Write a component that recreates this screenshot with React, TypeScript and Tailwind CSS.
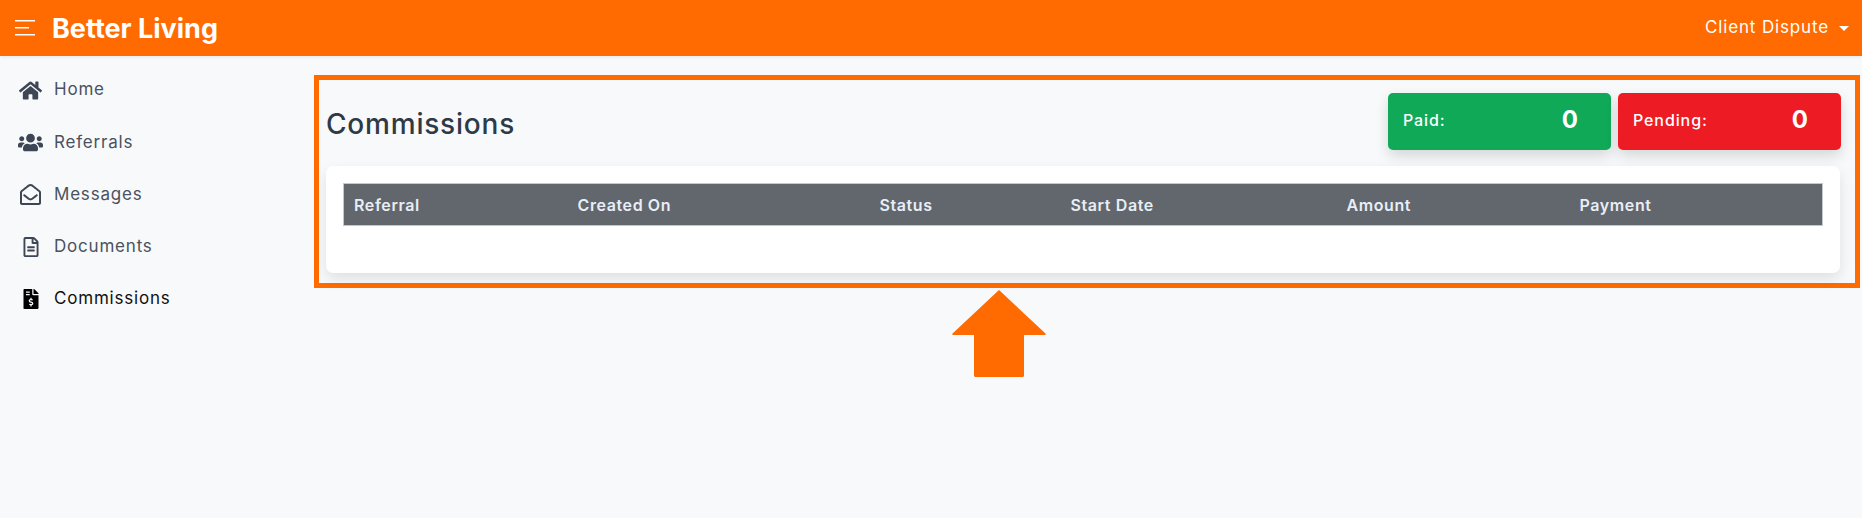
import { FaHome, FaUsers, FaRegEnvelopeOpen, FaRegFileAlt, FaFileInvoiceDollar } from "react-icons/fa";

const navItems = [
  { label: "Home", icon: FaHome, size: 23, active: false },
  { label: "Referrals", icon: FaUsers, size: 25, active: false },
  { label: "Messages", icon: FaRegEnvelopeOpen, size: 21, active: false },
  { label: "Documents", icon: FaRegFileAlt, size: 20, active: false },
  { label: "Commissions", icon: FaFileInvoiceDollar, size: 20, active: true },
];

const columns = [
  { label: "Referral", width: "w-[224px]" },
  { label: "Created On", width: "w-[302px]" },
  { label: "Status", width: "w-[191px]" },
  { label: "Start Date", width: "w-[276px]" },
  { label: "Amount", width: "w-[233px]" },
  { label: "Payment", width: "" },
];

const StatCard = ({ label, color }: { label: string; color: string }) => (
  <div className={`flex h-[57px] w-[223px] items-center justify-between rounded-[5px] pb-[3px] pl-[15px] pr-[33px] shadow-[0_6px_14px_rgba(0,0,0,0.14)] ${color}`}>
    <span className="text-[16px] font-medium tracking-[0.9px] text-white">{label}</span>
    <span className="text-[24px] font-bold text-white">0</span>
  </div>
);

const App = () => {
  return (
    <div className="h-[518px] w-[1862px] overflow-hidden bg-[#f8f9fb] font-['Inter',sans-serif]">
      {/* Header */}
      <header className="flex h-14 items-center justify-between bg-[#ff6b00] pl-[15px] pr-[13px] shadow-[0_1px_4px_rgba(0,0,0,0.08)]">
        <div className="flex items-center gap-[17px]">
          <svg width="20" height="16" viewBox="0 0 20 16" fill="#fff">
            <rect x="0" y="0" width="20" height="1.5" />
            <rect x="0" y="7" width="14" height="1.5" />
            <rect x="0" y="14" width="20" height="1.5" />
          </svg>
          <span className="text-[27px] font-bold leading-none text-white">Better Living</span>
        </div>
        <div className="flex items-center gap-[10px]">
          <span className="text-[17px] tracking-[0.85px] text-white">Client Dispute</span>
          <span className="h-0 w-0 border-x-[5.5px] border-t-[5.5px] border-x-transparent border-t-white" />
        </div>
      </header>

      <div className="flex">
        {/* Sidebar */}
        <nav className="flex w-[314px] shrink-0 flex-col pt-[8px]">
          {navItems.map(({ label, icon: Icon, size, active }) => (
            <div key={label} className="flex h-[52.2px] items-center">
              <span className={`flex w-[54px] justify-center pl-[7px] ${active ? "text-black" : "text-[#3c4654]"}`}>
                <Icon size={size} />
              </span>
              <span className={`text-[17px] tracking-[0.8px] ${active ? "text-[#111]" : "text-[#4a5260]"}`}>{label}</span>
            </div>
          ))}
        </nav>

        {/* Main */}
        <main className="flex w-[1546px] flex-col pt-[19px]">
          <div className="h-[213px] border-[5px] border-[#ff6b00] pl-[7px] pr-[15px]">
            <div className="flex h-[86px] items-center justify-between">
              <h1 className="mt-[2px] text-[28px] font-medium leading-none tracking-[0.8px] text-[#2f3a46]">Commissions</h1>
              <div className="-mr-px mb-[3px] flex gap-[7px]">
                <StatCard label="Paid:" color="bg-[#10a958]" />
                <StatCard label="Pending:" color="bg-[#ed1c24]" />
              </div>
            </div>
            <div className="h-[107px] rounded-[7px] bg-white px-[17px] pt-[17px] shadow-[0_6px_14px_rgba(0,0,0,0.1)]">
              <table className="w-full table-fixed border-collapse">
                <thead>
                  <tr className="h-[42px] bg-[#62666d]">
                    {columns.map((col) => (
                      <th key={col.label} className={`border-y border-[#c3c8cf] px-[10px] text-left text-[16px] font-semibold tracking-[0.6px] text-[#e8eef6] first:border-l last:border-r ${col.width}`}>
                        {col.label}
                      </th>
                    ))}
                  </tr>
                </thead>
              </table>
            </div>
          </div>

          {/* Annotation arrow */}
          <div className="ml-[638px] mt-[2px]">
            <svg width="94" height="87" viewBox="0 0 94 87" fill="#ff6b00">
              <path d="M47 0 L94 44 L93 45 L72 45 L72 86 L71 87 L23 87 L22 86 L22 45 L1 45 L0 44 Z" />
            </svg>
          </div>
        </main>
      </div>
    </div>
  );
};

export default App;
